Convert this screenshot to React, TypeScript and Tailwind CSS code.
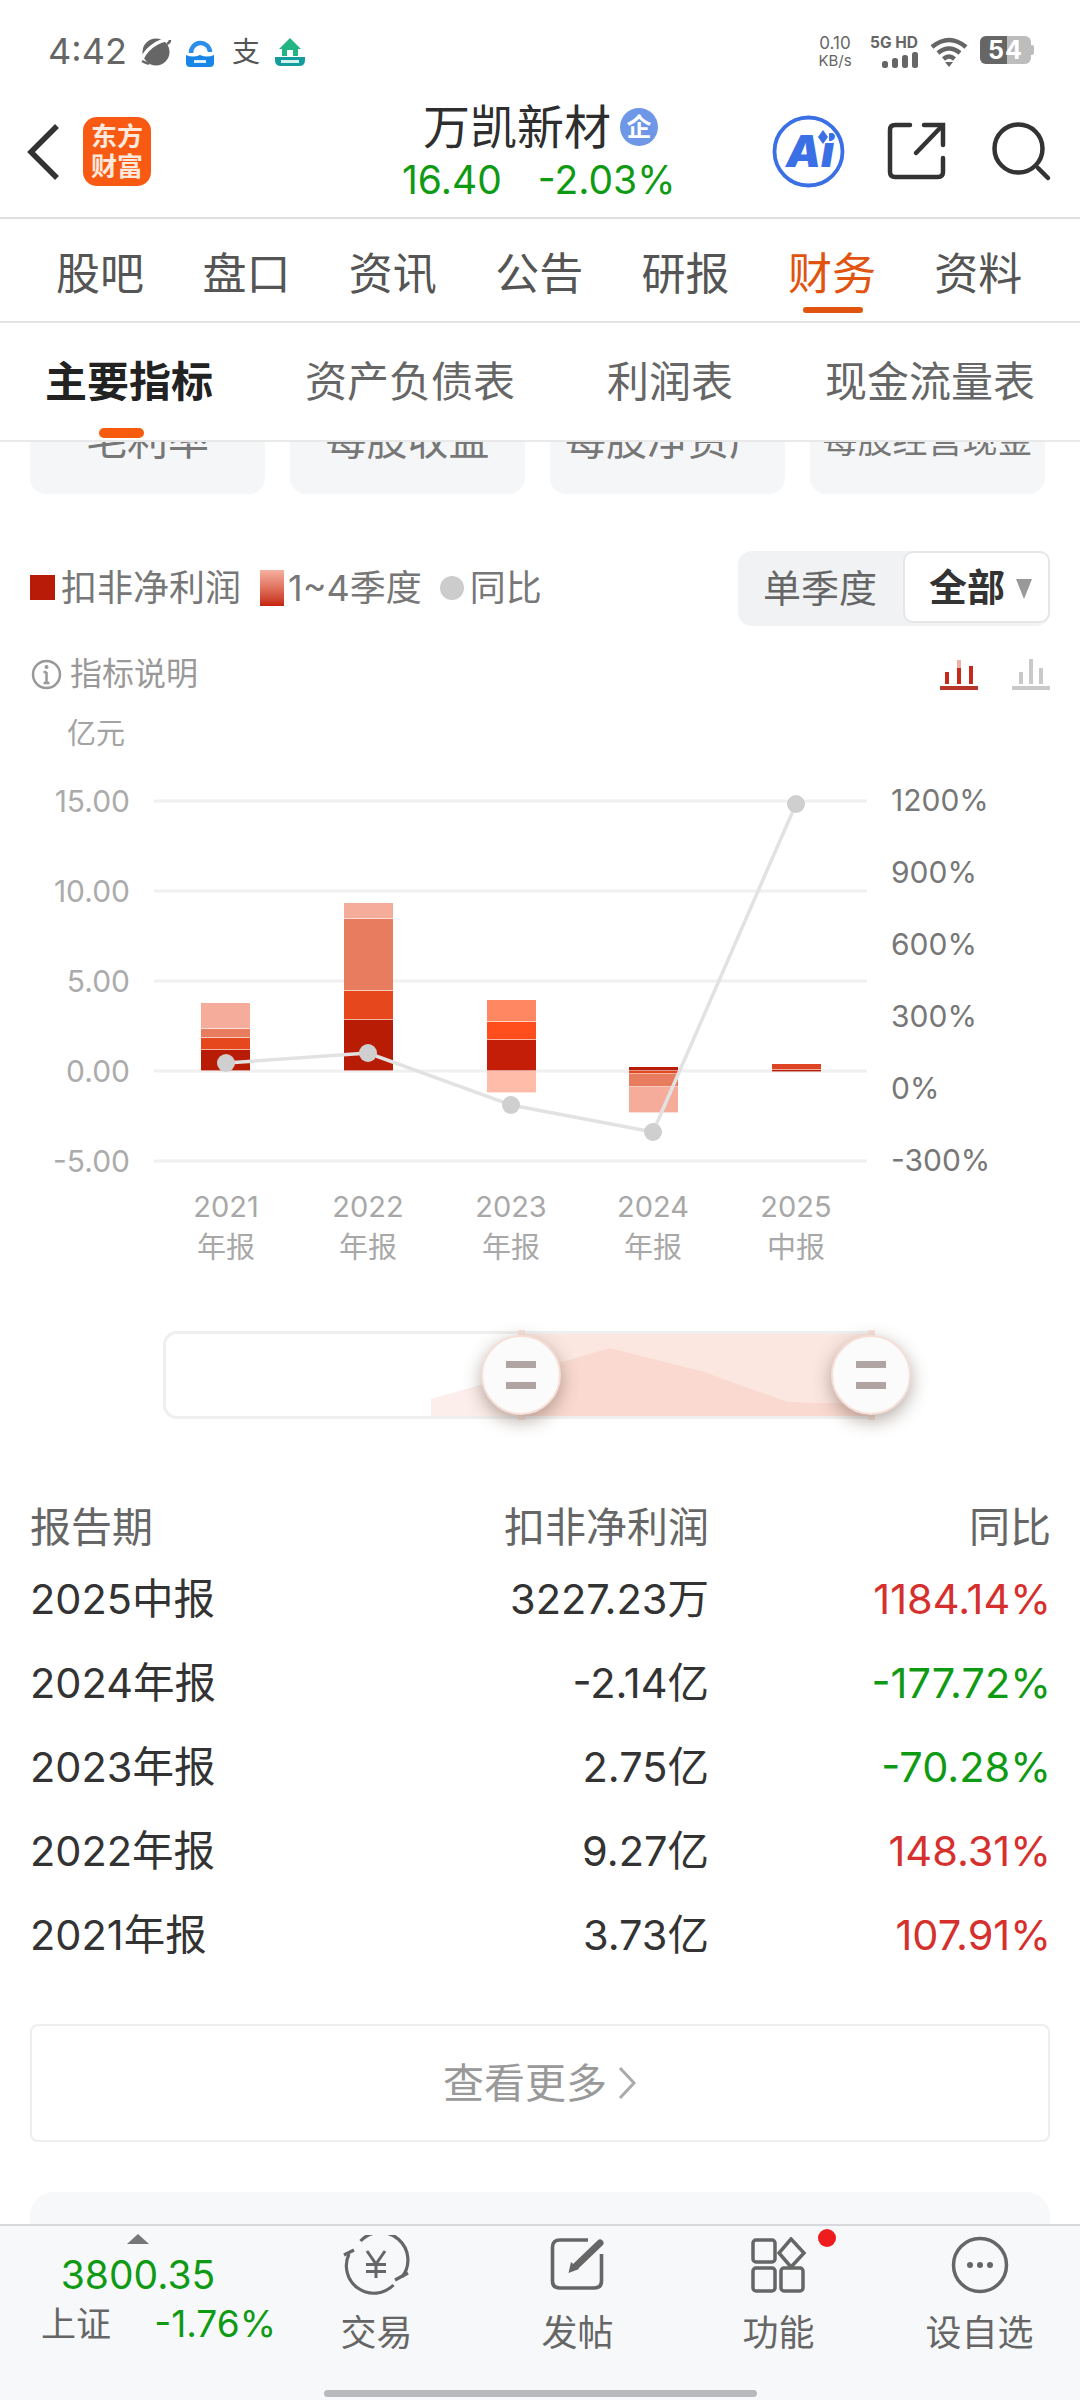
const TABS = ["股吧", "盘口", "资讯", "公告", "研报", "财务", "资料"];
const SUB_TABS = ["主要指标", "资产负债表", "利润表", "现金流量表"];
const CARDS = [
  { label: "毛利率", size: "text-[41px]" },
  { label: "每股收益", size: "text-[41px]" },
  { label: "每股净资产", size: "text-[41px]" },
  { label: "每股经营现金", size: "text-[35px]" },
];

const RED = "text-[#D5302D]";
const GREEN = "text-[#0F9A14]";

const ROWS = [
  { period: "2025中报", value: "3227.23万", yoy: "1184.14%", color: RED },
  { period: "2024年报", value: "-2.14亿", yoy: "-177.72%", color: GREEN },
  { period: "2023年报", value: "2.75亿", yoy: "-70.28%", color: GREEN },
  { period: "2022年报", value: "9.27亿", yoy: "148.31%", color: RED },
  { period: "2021年报", value: "3.73亿", yoy: "107.91%", color: RED },
];

// y values are in chart space, where the svg starts at page y=700
const BARS = [
  {
    x: 201,
    segs: [
      [302, 328, "#F5AC9A"],
      [328, 337, "#E77D5E"],
      [337, 349, "#E6471C"],
      [349, 370, "#B81C04"],
    ],
  },
  {
    x: 344,
    segs: [
      [202, 218, "#F5AC9A"],
      [218, 290, "#E77D5E"],
      [290, 319, "#E6471C"],
      [319, 370, "#B81C04"],
    ],
  },
  {
    x: 487,
    segs: [
      [299, 321, "#FF8863"],
      [321, 339, "#FF4D1C"],
      [339, 370, "#C41E08"],
      [370, 392, "#FFBCA8"],
    ],
  },
  {
    x: 629,
    segs: [
      [366, 370, "#B81C04"],
      [370, 373, "#E6471C"],
      [373, 386, "#E77D5E"],
      [386, 412, "#F5AC9A"],
    ],
  },
  {
    x: 772,
    segs: [
      [363, 369, "#DC4423"],
      [369, 371, "#B81C04"],
    ],
  },
] as { x: number; segs: [number, number, string][] }[];

const GRID = [
  { y: 100, label: "15.00" },
  { y: 190, label: "10.00" },
  { y: 280, label: "5.00" },
  { y: 370, label: "0.00" },
  { y: 460, label: "-5.00" },
];
const RIGHT_AXIS = [
  { y: 110, label: "1200%" },
  { y: 182, label: "900%" },
  { y: 254, label: "600%" },
  { y: 326, label: "300%" },
  { y: 398, label: "0%" },
  { y: 470, label: "-300%" },
];
const POINTS = [
  [226, 362],
  [368, 352],
  [511, 404],
  [653, 431],
  [796, 103],
];
const X_LABELS = [
  [226, "2021", "年报"],
  [368, "2022", "年报"],
  [511, "2023", "年报"],
  [653, "2024", "年报"],
  [796, "2025", "中报"],
] as [number, string, string][];

function StatusBar() {
  return (
    <div className="flex h-[70px] shrink-0 items-start pl-[48px] pt-[31px] text-[#666]">
      <span className="w-[92px] text-[36px] leading-[40px]">4:42</span>
      <div className="mt-[5px] flex items-center">
        <svg width="32" height="30" viewBox="0 0 32 30">
          <circle cx="16" cy="15" r="13.5" fill="#666" />
          <path d="M1 25 C4 14 16 3 31 2" fill="none" stroke="#fff" strokeWidth="3.5" />
          <path d="M2 24 C6 26 8 27 9 26 M30 3 C30 5 29 6 27 7" fill="none" stroke="#666" strokeWidth="2.5" />
        </svg>
        <svg className="ml-[13px]" width="30" height="30" viewBox="0 0 30 30" fill="none">
          <path d="M1 18 Q8 21 15 18 Q22 21 29 18 V26 Q29 30 25 30 H5 Q1 30 1 26 Z" fill="#1786E6" />
          <path d="M6 16 A9.5 9.5 0 1 1 25 15" stroke="#2B8FEA" strokeWidth="4.5" />
          <rect x="9" y="23" width="12" height="3" fill="#DDF0FF" />
        </svg>
        <span className="ml-[17px] w-[28px] text-[28px] leading-[32px] text-[#555]">支</span>
        <svg className="ml-[15px]" width="30" height="28" viewBox="0 0 30 28">
          <path d="M15 0 L26 11 H23 V18 H7 V11 H4 Z" fill="#22B583" />
          <rect x="12" y="12" width="6" height="6" fill="#fff" />
          <path d="M0 19 H30 V22 Q30 28 24 28 H6 Q0 28 0 22 Z" fill="#159C9C" />
          <rect x="6" y="22" width="18" height="3" fill="#CFF3EE" />
        </svg>
      </div>
      <div className="ml-auto mr-[46px] mt-[3px] flex items-start">
        <div className="flex w-[36px] flex-col items-center text-[#666]">
          <span className="text-[17px] leading-[18px]">0.10</span>
          <span className="text-[15px] leading-[17px]">KB/s</span>
        </div>
        <div className="ml-[15px] flex w-[50px] flex-col items-end">
          <span className="whitespace-nowrap text-[15.5px] font-bold leading-[18px]">5G HD</span>
          <svg width="36" height="16" viewBox="0 0 36 16" fill="#666">
            <rect x="0" y="9" width="6" height="7" rx="2.5" />
            <rect x="10" y="6" width="6" height="10" rx="2.5" />
            <rect x="20" y="3" width="6" height="13" rx="2.5" />
            <rect x="30" y="0" width="6" height="16" rx="2.5" />
          </svg>
        </div>
        <svg className="ml-[12px] mt-[3px]" width="38" height="30" viewBox="0 0 38 30" fill="none" stroke="#666" strokeWidth="4.5">
          <path d="M2 10 Q19 -4 36 10" />
          <path d="M8 16 Q19 7 30 16" />
          <path d="M13.5 22 Q19 17 24.5 22" />
          <path d="M15 25 H23 L19 30 Z" fill="#666" stroke="none" />
        </svg>
        <div className="relative ml-[12px] mt-[2px] flex h-[28px] w-[51px] rounded-[6px] bg-[#BDBDBD]">
          <div className="h-full w-[27px] rounded-l-[6px] bg-[#666]" />
          <span className="absolute inset-x-0 top-0 text-center text-[25px] font-bold leading-[28px] tracking-[1px] text-white">54</span>
        </div>
        <div className="mt-[11px] h-[10px] w-[3px] rounded-r-[2px] bg-[#BDBDBD]" />
      </div>
    </div>
  );
}

function Header() {
  return (
    <div className="relative h-[149px] shrink-0 border-b-2 border-[#DEDEDE]">
      <div className="flex h-full items-start">
        <svg className="ml-[25px] mt-[53px]" width="36" height="58" viewBox="0 0 36 58" fill="none" stroke="#333" strokeWidth="5.5">
          <path d="M32 3 L6 29 L32 55" />
        </svg>
        <div className="ml-[22px] mt-[47px] flex h-[69px] w-[68px] flex-col items-center justify-center rounded-[14px] bg-[#F85A14] text-[26px] font-bold leading-[30px] text-[#FFE9DC]">
          <span>东方</span>
          <span>财富</span>
        </div>
        <div className="ml-[272px] flex w-[280px] flex-col">
          <div className="mt-[27px] flex items-center">
            <span className="text-[47px] leading-[60px] text-[#2E2E2E]">万凯新材</span>
            <span className="ml-[9px] flex h-[38px] w-[38px] items-center justify-center rounded-full bg-[#6F97E8] text-[25px] font-bold leading-none text-white">企</span>
          </div>
          <div className={`-ml-[21px] mt-[1px] flex gap-[36px] text-[39px] leading-[44px] ${GREEN}`}>
            <span>16.40</span>
            <span>-2.03%</span>
          </div>
        </div>
        <svg className="ml-[68px] mt-[43px]" width="76" height="76" viewBox="0 0 76 76" fill="none">
          <circle cx="37.5" cy="38.5" r="34" stroke="#3A6FE6" strokeWidth="3.8" />
          <text x="15" y="54" fontSize="44" fontWeight="900" fontStyle="italic" fill="#3A6FE6">Ai</text>
          <rect x="45" y="17" width="13" height="13" fill="#fff" />
          <path d="M52 17 L57 24 L52 31 L47 24 Z" fill="#3A6FE6" />
        </svg>
        <svg className="ml-[39px] mt-[50px]" width="62" height="62" viewBox="0 0 62 62" fill="none" stroke="#333" strokeWidth="4.5" strokeLinecap="round">
          <path d="M24 5 H9 Q4 5 4 10 V52 Q4 57 9 57 H52 Q57 57 57 52 V38" />
          <path d="M30 33 L56 6" />
          <path d="M38 5 H57 V25" />
        </svg>
        <svg className="ml-[39px] mt-[48px]" width="66" height="66" viewBox="0 0 66 66" fill="none" stroke="#333" strokeWidth="4.5">
          <circle cx="31.5" cy="30.5" r="24" />
          <path d="M51 50 L61 60" strokeLinecap="round" />
        </svg>
      </div>
    </div>
  );
}

function MainTabs() {
  return (
    <div className="relative flex h-[104px] shrink-0 items-start gap-[58.4px] border-b-2 border-[#E4E4E4] pl-[56px] pt-[27px]">
      {TABS.map((t) => (
        <span key={t} className={`text-[44px] leading-[56px] ${t === "财务" ? "text-[#E0540F]" : "text-[#555]"}`}>
          {t}
        </span>
      ))}
      <div className="absolute left-[803px] top-[88px] h-[6px] w-[60px] rounded-full bg-[#E0540F]" />
    </div>
  );
}

function SubTabs() {
  return (
    <div className="relative flex h-[119px] shrink-0 items-start gap-[92px] border-b-2 border-[#E9E9E9] pl-[45px] pt-[33px]">
      {SUB_TABS.map((t, i) => (
        <span key={t} className={`text-[42px] leading-[52px] ${i === 0 ? "font-bold text-[#222]" : "text-[#666]"}`}>
          {t}
        </span>
      ))}
      <div className="absolute left-[99px] top-[105px] h-[10px] w-[45px] rounded-full bg-[#F85A0E]" />
    </div>
  );
}

function Legend() {
  return (
    <div className="mt-[57px] flex h-[75px] items-center justify-between pl-[30px] pr-[30px]">
      <div className="-mt-[2px] flex items-center text-[36px] leading-[44px] text-[#777]">
        <span className="h-[25px] w-[25px] bg-[#B81C08]" />
        <span className="ml-[6px]">扣非净利润</span>
        <span className="ml-[19px] h-[36px] w-[24px] bg-linear-to-b from-[#F6B0A0] to-[#C4200A]" />
        <span className="ml-[4px]">1~4季度</span>
        <span className="ml-[18px] h-[24px] w-[24px] rounded-full bg-[#CCCCCC]" />
        <span className="ml-[6px]">同比</span>
      </div>
      <div className="flex h-[75px] w-[312px] items-start rounded-[14px] bg-[#F1F2F4]">
        <span className="ml-[25px] mt-[13px] text-[38px] leading-[48px] text-[#666]">单季度</span>
        <div className="ml-auto flex h-[72px] w-[147px] items-center rounded-[10px] border-2 border-[#E6E6E6] bg-white pl-[24px]">
          <span className="text-[38px] font-bold leading-[48px] text-[#333]">全部</span>
          <svg className="ml-[10px] mt-[4px]" width="18" height="24" viewBox="0 0 18 24" fill="#999">
            <path d="M1 2 H17 L9 22 Z" />
          </svg>
        </div>
      </div>
    </div>
  );
}

function MetricRow() {
  return (
    <div className="mt-[32px] flex h-[32px] items-center pl-[31px] pr-[30px]">
      <svg width="31" height="31" viewBox="0 0 31 31" fill="none" stroke="#999" strokeWidth="2.5">
        <circle cx="15.5" cy="15.5" r="13.5" />
        <path d="M15.5 13 V24 M12.5 13 H15.5 M12.5 24 H18.5" />
        <circle cx="15.5" cy="8" r="2" fill="#999" stroke="none" />
      </svg>
      <span className="ml-[8px] text-[32px] leading-[40px] text-[#999]">指标说明</span>
      <svg className="ml-auto" width="38" height="32" viewBox="0 0 38 32">
        <rect x="0" y="28" width="38" height="4" fill="#B8352A" />
        <rect x="5" y="14" width="4" height="12" fill="#C8281A" />
        <rect x="17" y="2" width="4" height="8" fill="#F0B0A8" />
        <rect x="17" y="10" width="4" height="16" fill="#C8281A" />
        <rect x="29" y="8" width="4" height="18" fill="#C8281A" />
      </svg>
      <svg className="ml-[34px]" width="38" height="32" viewBox="0 0 38 32" fill="#C9C9C9">
        <rect x="0" y="28" width="38" height="4" />
        <rect x="7" y="14" width="4" height="12" />
        <rect x="17" y="1" width="4" height="25" />
        <rect x="27" y="10" width="4" height="16" />
      </svg>
    </div>
  );
}

function Chart() {
  return (
    <svg className="mt-[11px] block" width="1080" height="580" viewBox="0 0 1080 580">
      <text x="96" y="43" fontSize="29" textAnchor="middle" fill="#A3A3A3">亿元</text>
      {GRID.map((g) => (
        <g key={g.y}>
          <rect x="154" y={g.y - 1.5} width="713" height="3" fill="#F0F0F0" />
          <text x="130" y={g.y + 11} fontSize="30" textAnchor="end" fill="#ABABAB">{g.label}</text>
        </g>
      ))}
      {RIGHT_AXIS.map((a) => (
        <text key={a.y} x="891" y={a.y} fontSize="30" fill="#777">
          {a.label}
        </text>
      ))}
      {BARS.map((b) =>
        b.segs.map(([top, bottom, color]) => (
          <rect key={`${b.x}-${top}`} x={b.x} y={top} width="49" height={bottom - top - 0.6} fill={color} />
        )),
      )}
      <polyline points={POINTS.map((p) => p.join(",")).join(" ")} fill="none" stroke="#E2E2E2" strokeWidth="3.5" />
      {POINTS.map(([x, y]) => (
        <circle key={x} cx={x} cy={y} r="9" fill="#CFCFCF" />
      ))}
      {X_LABELS.map(([x, year, kind]) => (
        <g key={year} fontSize="29" textAnchor="middle" fill="#A8A8A8">
          <text x={x} y="516">{year}</text>
          <text x={x} y="557">{kind}</text>
        </g>
      ))}
    </svg>
  );
}

function Handle({ left }: { left: string }) {
  return (
    <div className={`absolute -top-[1px] flex h-[90px] w-0 items-center justify-center ${left}`}>
      <div className="absolute h-[90px] w-[7px] bg-[#F8E2DA]" />
      <div className="relative flex h-[80px] w-[80px] shrink-0 flex-col items-center justify-center gap-[14px] rounded-full border-2 border-[#F5DFD7] bg-[#FBFBFB] shadow-[0_6px_18px_rgba(90,70,60,0.45)]">
        <div className="h-[7px] w-[30px] bg-[#B0A5A3]" />
        <div className="h-[7px] w-[30px] bg-[#B0A5A3]" />
      </div>
    </div>
  );
}

function RangeSlider() {
  return (
    <div className="relative ml-[163px] mt-[50px] h-[88px] w-[709px]">
      <div className="h-full w-full overflow-hidden rounded-l-[14px] border-[3px] border-r-0 border-[#EFEFEF] bg-white">
        <svg width="709" height="82" viewBox="0 0 709 82">
          <rect x="357" y="0" width="352" height="82" fill="#FBE6E0" />
          <path d="M265 82 V65 L444 14 L535 37 L622 68 L709 70 V82 Z" fill="#FCEEEA" />
          <path d="M357 82 V39 L444 14 L535 37 L622 68 L709 70 V82 Z" fill="#F9D9D0" />
        </svg>
      </div>
      <Handle left="left-[358px]" />
      <Handle left="left-[708px]" />
    </div>
  );
}

function DataTable() {
  return (
    <div className="mt-[78px] grid grid-cols-[340px_339px_342px] pl-[30px]">
      <div className="h-[60px] text-[41px] leading-[60px] text-[#666]">报告期</div>
      <div className="h-[60px] text-right text-[41px] leading-[60px] text-[#666]">扣非净利润</div>
      <div className="h-[60px] text-right text-[41px] leading-[60px] text-[#666]">同比</div>
      {ROWS.map((r) => (
        <div key={r.period} className="contents text-[41.5px] leading-[84px]">
          <div className="h-[84px] text-[#333]">{r.period}</div>
          <div className="h-[84px] text-right text-[#333]">{r.value}</div>
          <div className={`h-[84px] text-right ${r.color}`}>{r.yoy}</div>
        </div>
      ))}
    </div>
  );
}

function MoreButton() {
  return (
    <div className="mx-[30px] mt-[47px] flex h-[118px] items-center justify-center rounded-[8px] border-2 border-[#EEEEEE]">
      <span className="text-[41px] leading-[52px] text-[#999]">查看更多</span>
      <svg className="ml-[10px]" width="20" height="34" viewBox="0 0 20 34" fill="none" stroke="#AAA" strokeWidth="3">
        <path d="M3 2 L17 17 L3 32" />
      </svg>
    </div>
  );
}

function TradeIcon() {
  return (
    <svg width="68" height="60" viewBox="0 0 68 60" fill="none" stroke="#666" strokeWidth="3.2">
      <path d="M17.5 6 A27.5 27.5 0 0 1 59 42" />
      <path d="M52 45 L65 38" />
      <path d="M50.5 50 A27.5 27.5 0 0 1 6 19" />
      <path d="M1 20 L11 15" />
      <path d="M24 16 L33 29 L42 16 M33 29 V43 M23 29.5 H43 M23 36.5 H43" strokeWidth="3" />
    </svg>
  );
}

function PostIcon() {
  return (
    <svg width="56" height="58" viewBox="0 0 56 58" fill="none" stroke="#666" strokeWidth="3.6">
      <path d="M38 4 H10 Q2.5 4 2.5 11 V45 Q2.5 52 10 52 H44 Q51.5 52 51.5 45 V18" />
      <path d="M26 30 L50 7" strokeWidth="7" strokeLinecap="round" />
      <path d="M18.5 37 L21 26 L29 33 Z" fill="#666" stroke="none" />
    </svg>
  );
}

function FeatureIcon() {
  return (
    <svg width="56" height="56" viewBox="0 0 56 56" fill="none" stroke="#666" strokeWidth="3.5">
      <rect x="2" y="3" width="22" height="22" rx="3" />
      <path d="M40 2 L53 16 L40 30 L28 16 Z" />
      <rect x="2" y="31" width="22" height="23" rx="3" />
      <rect x="30" y="31" width="22" height="23" rx="3" />
    </svg>
  );
}

function WatchIcon() {
  return (
    <svg width="58" height="58" viewBox="0 0 58 58" fill="none">
      <circle cx="29" cy="29" r="26.5" stroke="#666" strokeWidth="3.5" />
      <circle cx="19" cy="29" r="3" fill="#666" />
      <circle cx="29" cy="29" r="3" fill="#666" />
      <circle cx="39" cy="29" r="3" fill="#666" />
    </svg>
  );
}

function NavItem({ icon, label }: { icon: React.ReactNode; label: string }) {
  return (
    <div className="flex w-[201px] flex-col items-center">
      <div className="flex h-[60px] items-center justify-center">{icon}</div>
      <span className="mt-[15px] text-[36px] leading-[46px] text-[#666]">{label}</span>
    </div>
  );
}

function BottomBar() {
  return (
    <div className="relative flex h-[176px] shrink-0 items-start border-t-2 border-[#D8D9DC] bg-[#F7F8FA]">
      <div className="flex w-[276px] flex-col items-center pt-[8px]">
        <svg width="22" height="10" viewBox="0 0 22 10" fill="#777">
          <path d="M11 0 L22 10 H0 Z" />
        </svg>
        <span className={`mt-[6px] text-[39px] leading-[50px] ${GREEN}`}>3800.35</span>
        <div className="mt-[1px] flex w-full items-center justify-between pl-[41px]">
          <span className="text-[35px] leading-[46px] text-[#666]">上证</span>
          <span className={`text-[37px] leading-[46px] ${GREEN}`}>-1.76%</span>
        </div>
      </div>
      <div className="flex pt-[9px]">
        <NavItem icon={<TradeIcon />} label="交易" />
        <NavItem icon={<PostIcon />} label="发帖" />
        <NavItem icon={<FeatureIcon />} label="功能" />
        <NavItem icon={<WatchIcon />} label="设自选" />
      </div>
      <div className="absolute left-[818px] top-[3px] h-[18px] w-[18px] rounded-full bg-[#EE1C1C]" />
      <div className="absolute bottom-[3px] left-[324px] h-[7px] w-[433px] rounded-full bg-[#B9BABD]" />
    </div>
  );
}

export default function App() {
  return (
    <div className="flex h-[2400px] w-[1080px] flex-col overflow-hidden bg-white [font-family:Inter,'Noto_Sans_CJK_SC',sans-serif]">
      <StatusBar />
      <Header />
      <MainTabs />
      <SubTabs />
      <div className="min-h-0 flex-1 overflow-hidden">
        <div className="-mt-[50px] flex gap-[25px] px-[30px]">
          {CARDS.map((c) => (
            <div key={c.label} className={`h-[102px] w-[235px] rounded-[16px] bg-[#F5F6F8] pt-[25px] text-center leading-[46px] text-[#777] ${c.size}`}>
              {c.label}
            </div>
          ))}
        </div>
        <Legend />
        <MetricRow />
        <Chart />
        <RangeSlider />
        <DataTable />
        <MoreButton />
        <div className="mx-[30px] mt-[50px] h-[60px] rounded-t-[24px] bg-[#F7F8FA]" />
      </div>
      <BottomBar />
    </div>
  );
}
